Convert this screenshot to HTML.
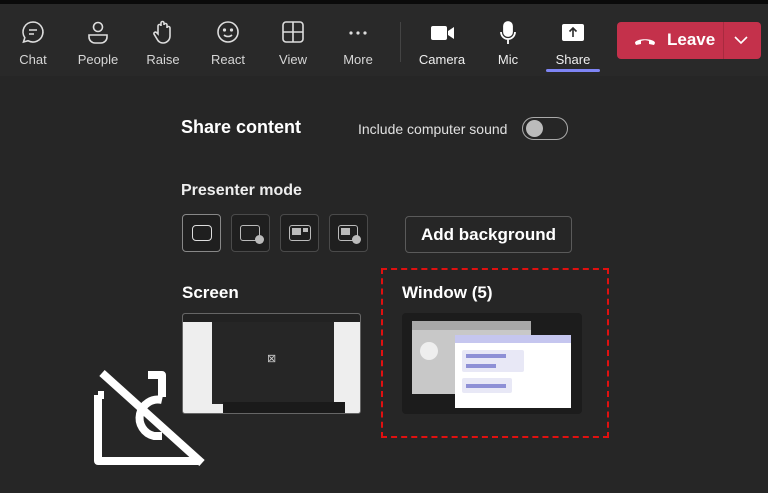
<!DOCTYPE html>
<html><head><meta charset="utf-8"><style>
*{margin:0;padding:0;box-sizing:border-box}
body{width:768px;height:493px;background:#262626;font-family:"Liberation Sans",sans-serif;color:#fff;position:relative;overflow:hidden}
.a{position:absolute}
.top{left:0;top:0;width:768px;height:76px;background:#292929;border-top:4px solid #0a0a0a}
.lbl{position:absolute;top:48px;font-size:13px;color:#d6d6d6;width:60px;text-align:center}
.ic{position:absolute;top:16px}
.pm{position:absolute;top:214px;width:39px;height:38px;border:1px solid #4a4a4a;border-radius:4px;background:#1f1f1f}
</style></head><body>
<div class="a top">
<svg class="ic" style="left:21px" width="24" height="26" viewBox="0 0 24 26" fill="none" stroke="#ddd" stroke-width="1.6"><path d="M12 2a10 10 0 1 1-5 18.7L2.5 22l1.3-4.3A10 10 0 0 1 12 2z"/><path d="M8 10h8M8 14h5"/></svg>
<svg class="ic" style="left:86px" width="24" height="26" viewBox="0 0 24 26" fill="none" stroke="#ddd" stroke-width="1.6"><circle cx="12" cy="7" r="4.5"/><path d="M3 15h18v2a6 6 0 0 1-6 6H9a6 6 0 0 1-6-6z"/></svg>
<svg class="ic" style="left:151px" width="24" height="26" viewBox="0 0 24 26" fill="none" stroke="#ddd" stroke-width="1.6"><path d="M7 14V6a1.5 1.5 0 0 1 3 0V3a1.5 1.5 0 0 1 3 0v2a1.5 1.5 0 0 1 3 0v3a1.5 1.5 0 0 1 3 0v8a7 7 0 0 1-7 7c-3 0-5-2-6-4l-3-5a1.5 1.5 0 0 1 2.5-1.5z"/></svg>
<svg class="ic" style="left:216px" width="24" height="26" viewBox="0 0 24 26" fill="none" stroke="#ddd" stroke-width="1.6"><circle cx="12" cy="12" r="10"/><circle cx="8.5" cy="10" r=".8" fill="#ddd"/><circle cx="15.5" cy="10" r=".8" fill="#ddd"/><path d="M8 15c2 2 6 2 8 0"/></svg>
<svg class="ic" style="left:281px" width="24" height="26" viewBox="0 0 24 26" fill="none" stroke="#ddd" stroke-width="1.6"><rect x="2" y="2" width="20" height="20" rx="3"/><path d="M12 2v20M2 12h20"/></svg>
<svg class="ic" style="left:346px" width="24" height="26" viewBox="0 0 24 26" fill="#ddd"><circle cx="5" cy="13" r="1.6"/><circle cx="12" cy="13" r="1.6"/><circle cx="19" cy="13" r="1.6"/></svg>
<div class="a" style="left:400px;top:18px;width:1px;height:40px;background:#444"></div>
<svg class="ic" style="left:430px" width="26" height="26" viewBox="0 0 26 26" fill="#fff"><rect x="1" y="6" width="16" height="14" rx="2"/><path d="M18 11l6-4v12l-6-4z"/></svg>
<svg class="ic" style="left:496px" width="24" height="26" viewBox="0 0 24 26" fill="none" stroke="#fff" stroke-width="1.8"><rect x="8" y="2" width="8" height="14" rx="4" fill="#fff"/><path d="M5 12a7 7 0 0 0 14 0M12 19v5"/></svg>
<svg class="ic" style="left:561px" width="24" height="26" viewBox="0 0 24 26"><rect x="1" y="4" width="22" height="17" rx="2" fill="#fff"/><path d="M12 17V8M8.5 11.5L12 8l3.5 3.5" stroke="#292929" stroke-width="1.6" fill="none"/></svg>
<div class="lbl" style="left:3px">Chat</div><div class="lbl" style="left:68px">People</div><div class="lbl" style="left:133px">Raise</div><div class="lbl" style="left:198px">React</div><div class="lbl" style="left:263px">View</div><div class="lbl" style="left:328px">More</div>
<div class="lbl" style="left:412px;color:#eee">Camera</div><div class="lbl" style="left:478px;color:#eee">Mic</div><div class="lbl" style="left:543px;color:#eee">Share</div>
<div class="a" style="left:546px;top:65px;width:54px;height:3px;background:#7f85f5;border-radius:2px"></div>
<div class="a" style="left:617px;top:18px;width:144px;height:37px;background:#c4314b;border-radius:4px"></div>
<div class="a" style="left:723px;top:18px;width:1px;height:37px;background:#a82a3f"></div>
<svg class="a" style="left:633px;top:30px" width="24" height="12" viewBox="0 0 24 12"><path d="M2 9c0-5 20-5 20 0l-1 2-5-1v-3c-3-1-5-1-8 0v3l-5 1z" fill="#fff"/></svg>
<div class="a" style="left:667px;top:26px;font-size:17px;font-weight:bold">Leave</div>
<svg class="a" style="left:733px;top:30px" width="16" height="12" viewBox="0 0 16 12" fill="none" stroke="#fff" stroke-width="1.6"><path d="M2 3l6 6 6-6"/></svg>
</div>
<div class="a" style="left:181px;top:117px;font-size:18px;font-weight:bold">Share content</div>
<div class="a" style="left:358px;top:121px;font-size:14px;color:#e0e0e0">Include computer sound</div>
<div class="a" style="left:522px;top:117px;width:46px;height:23px;border:1.5px solid #aaa;border-radius:12px"></div>
<div class="a" style="left:526px;top:120px;width:17px;height:17px;border-radius:50%;background:#bbb"></div>
<div class="a" style="left:181px;top:182px;font-size:16px;font-weight:bold;color:#eee">Presenter mode</div>
<div class="pm" style="left:182px;border-color:#888"><div class="a" style="left:9px;top:10px;width:20px;height:16px;border:1.5px solid #ddd;border-radius:4px"></div></div>
<div class="pm" style="left:231px"><div class="a" style="left:8px;top:10px;width:20px;height:16px;border:1.5px solid #bbb;border-radius:3px"></div><div class="a" style="left:23px;top:20px;width:9px;height:9px;border-radius:50%;background:#bbb"></div></div>
<div class="pm" style="left:280px"><div class="a" style="left:8px;top:10px;width:22px;height:16px;border:1.5px solid #bbb;border-radius:3px"></div><div class="a" style="left:11px;top:13px;width:9px;height:7px;background:#bbb"></div><div class="a" style="left:22px;top:13px;width:5px;height:4px;background:#bbb"></div></div>
<div class="pm" style="left:329px"><div class="a" style="left:8px;top:10px;width:20px;height:16px;border:1.5px solid #bbb;border-radius:3px"></div><div class="a" style="left:11px;top:13px;width:9px;height:7px;background:#bbb"></div><div class="a" style="left:22px;top:20px;width:9px;height:9px;border-radius:50%;background:#bbb"></div></div>
<div class="a" style="left:405px;top:216px;width:167px;height:37px;border:1px solid #5a5a5a;border-radius:4px;background:#262626;font-size:17px;font-weight:bold;text-align:center;line-height:35px">Add background</div>
<div class="a" style="left:182px;top:283px;font-size:17px;font-weight:bold">Screen</div>
<div class="a" style="left:182px;top:313px;width:179px;height:101px;border:1px solid #666;border-radius:3px;background:#eee;overflow:hidden">
<div class="a" style="left:0;top:0;width:179px;height:8px;background:#222"></div>
<div class="a" style="left:29px;top:8px;width:122px;height:82px;background:#262626"></div>
<div class="a" style="left:40px;top:88px;width:122px;height:12px;background:#1a1a1a"></div>
<div class="a" style="left:84px;top:38px;font-size:11px;color:#ccc">⊠</div></div>
<div class="a" style="left:402px;top:283px;font-size:17px;font-weight:bold">Window (5)</div>
<div class="a" style="left:402px;top:313px;width:180px;height:101px;background:#1c1c1c;border-radius:4px">
<div class="a" style="left:10px;top:8px;width:119px;height:73px;background:#c8c8c8"></div>
<div class="a" style="left:10px;top:8px;width:119px;height:9px;background:#a8a8a8"></div>
<div class="a" style="left:18px;top:29px;width:18px;height:18px;border-radius:50%;background:#eee"></div>
<div class="a" style="left:53px;top:22px;width:116px;height:73px;background:#fff"></div>
<div class="a" style="left:53px;top:22px;width:116px;height:8px;background:#c5c6ef"></div>
<div class="a" style="left:60px;top:37px;width:62px;height:22px;background:#e8e8f6;border-radius:2px"></div>
<div class="a" style="left:64px;top:41px;width:40px;height:4px;background:#8e90d6"></div>
<div class="a" style="left:64px;top:51px;width:30px;height:4px;background:#8e90d6"></div>
<div class="a" style="left:60px;top:65px;width:50px;height:15px;background:#e8e8f6;border-radius:2px"></div>
<div class="a" style="left:64px;top:71px;width:40px;height:4px;background:#8e90d6"></div>
</div>
<div class="a" style="left:381px;top:268px;width:228px;height:170px;border:2.5px dashed #e01010"></div>
<svg class="a" style="left:90px;top:365px" width="125" height="105" viewBox="0 0 125 105" fill="none" stroke="#fff" stroke-width="8" stroke-linejoin="round"><path d="M58 10h14v22"/><path d="M8 30v66h100"/><path d="M8 30h6"/><path d="M72 35a18 18 0 0 0-8 36h8"/><path d="M12 8l100 90"/></svg>
</body></html>
